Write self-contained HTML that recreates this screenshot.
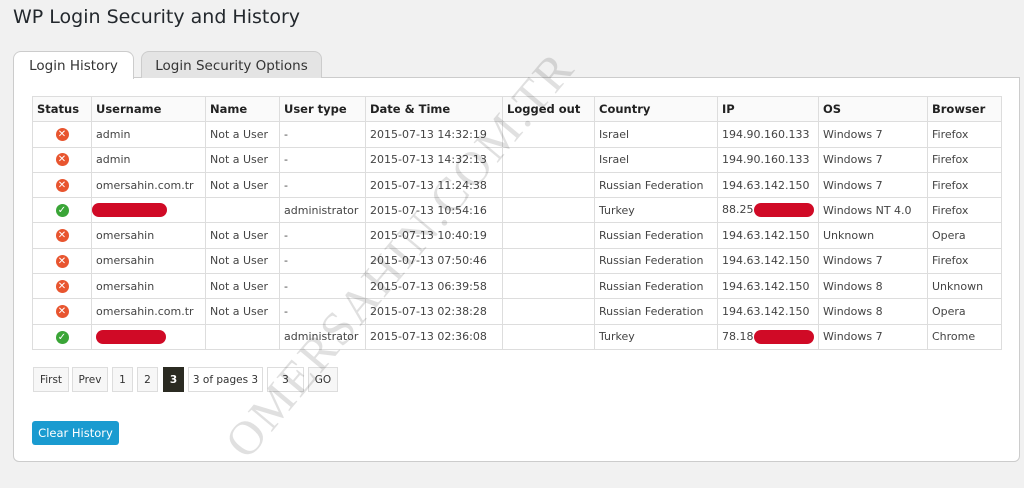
<!DOCTYPE html><html style="overflow:hidden"><head><style>
body{margin:0;background:#f1f1f1;font-family:"DejaVu Sans","Liberation Sans",sans-serif;width:1024px;height:488px;overflow:hidden;position:relative}
h1{position:absolute;left:13px;top:6px;margin:0;font-weight:normal;font-size:19px;color:#23282d}
.tab{position:absolute;top:51px;height:27px;border:1px solid #ccc;border-bottom:none;border-radius:8px 8px 0 0;font-size:13.5px;color:#333;line-height:29px;text-align:center;box-sizing:border-box}
.panel{position:absolute;left:13px;top:77px;width:1007px;height:385px;background:#fff;border:1px solid #ccc;border-radius:0 0 6px 6px;box-sizing:border-box}
table{position:absolute;left:32px;top:96px;border-collapse:collapse;font-size:11px;color:#444}
td,th{border:1px solid #ddd;height:24.3px;padding:0 4px;text-align:left;white-space:nowrap}
th{font-size:11.5px;color:#222;background:#fafafa}
td.s{text-align:center;padding:0}
.x,.ok{display:inline-block;width:13px;height:13px;border-radius:50%;color:#fff;font-size:10px;line-height:13px;font-weight:bold;text-align:center;vertical-align:middle}
.x{background:#e8552f}.ok{background:#3aa537}
.red{display:inline-block;width:75px;height:14px;background:#d00a26;border-radius:7px;vertical-align:middle}
.pg{position:absolute;top:367px;height:25px;border:1px solid #ddd;background:#f7f7f7;font-size:10.5px;color:#333;line-height:25px;text-align:center;box-sizing:border-box}
.btn{position:absolute;left:32px;top:421px;width:87px;height:24px;background:#1a9bd0;border-radius:3px;color:#fff;font-size:11.5px;line-height:24px;text-align:center}
.wm{position:absolute;left:400px;top:255px;font-family:"Liberation Serif",serif;font-size:48px;color:rgba(0,0,0,.12);transform:translate(-50%,-50%) rotate(-50deg);white-space:nowrap;letter-spacing:2px}
</style></head><body>
<h1>WP Login Security and History</h1>
<div class="panel"></div>
<div class="tab" style="left:13px;width:121px;background:#fff;height:28px;z-index:2">Login History</div>
<div class="tab" style="left:141px;width:181px;background:#e4e4e4">Login Security Options</div>
<table>
<colgroup><col style="width:59px"><col style="width:114px"><col style="width:74px"><col style="width:86px"><col style="width:137px"><col style="width:92px"><col style="width:123px"><col style="width:101px"><col style="width:109px"><col style="width:74px"></colgroup>
<tr><th>Status</th><th>Username</th><th>Name</th><th>User type</th><th>Date &amp; Time</th><th>Logged out</th><th>Country</th><th>IP</th><th>OS</th><th>Browser</th></tr>
<tr><td class="s"><span class="x">✕</span></td><td>admin</td><td>Not a User</td><td>-</td><td>2015-07-13 14:32:19</td><td></td><td>Israel</td><td>194.90.160.133</td><td>Windows 7</td><td>Firefox</td></tr>
<tr><td class="s"><span class="x">✕</span></td><td>admin</td><td>Not a User</td><td>-</td><td>2015-07-13 14:32:13</td><td></td><td>Israel</td><td>194.90.160.133</td><td>Windows 7</td><td>Firefox</td></tr>
<tr><td class="s"><span class="x">✕</span></td><td>omersahin.com.tr</td><td>Not a User</td><td>-</td><td>2015-07-13 11:24:38</td><td></td><td>Russian Federation</td><td>194.63.142.150</td><td>Windows 7</td><td>Firefox</td></tr>
<tr><td class="s"><span class="ok">✓</span></td><td style="padding-left:0"><span class="red"></span></td><td></td><td>administrator</td><td>2015-07-13 10:54:16</td><td></td><td>Turkey</td><td>88.25<span class="red" style="width:60px"></span></td><td>Windows NT 4.0</td><td>Firefox</td></tr>
<tr><td class="s"><span class="x">✕</span></td><td>omersahin</td><td>Not a User</td><td>-</td><td>2015-07-13 10:40:19</td><td></td><td>Russian Federation</td><td>194.63.142.150</td><td>Unknown</td><td>Opera</td></tr>
<tr><td class="s"><span class="x">✕</span></td><td>omersahin</td><td>Not a User</td><td>-</td><td>2015-07-13 07:50:46</td><td></td><td>Russian Federation</td><td>194.63.142.150</td><td>Windows 7</td><td>Firefox</td></tr>
<tr><td class="s"><span class="x">✕</span></td><td>omersahin</td><td>Not a User</td><td>-</td><td>2015-07-13 06:39:58</td><td></td><td>Russian Federation</td><td>194.63.142.150</td><td>Windows 8</td><td>Unknown</td></tr>
<tr><td class="s"><span class="x">✕</span></td><td>omersahin.com.tr</td><td>Not a User</td><td>-</td><td>2015-07-13 02:38:28</td><td></td><td>Russian Federation</td><td>194.63.142.150</td><td>Windows 8</td><td>Opera</td></tr>
<tr><td class="s"><span class="ok">✓</span></td><td><span class="red" style="width:70px"></span></td><td></td><td>administrator</td><td>2015-07-13 02:36:08</td><td></td><td>Turkey</td><td>78.18<span class="red" style="width:60px"></span></td><td>Windows 7</td><td>Chrome</td></tr>
</table>
<div class="pg" style="left:33px;width:36px">First</div>
<div class="pg" style="left:72px;width:36px">Prev</div>
<div class="pg" style="left:112px;width:21px">1</div>
<div class="pg" style="left:137px;width:21px">2</div>
<div class="pg" style="left:163px;width:21px;background:#2b2b22;color:#fff;font-weight:bold;border-color:#2b2b22">3</div>
<div class="pg" style="left:188px;width:75px;background:#fff">3 of pages 3</div>
<div class="pg" style="left:267px;width:37px;background:#fff">3</div>
<div class="pg" style="left:308px;width:30px">GO</div>
<div class="btn">Clear History</div>
<div class="wm">OMERSAHIN.COM.TR</div>
</body></html>
